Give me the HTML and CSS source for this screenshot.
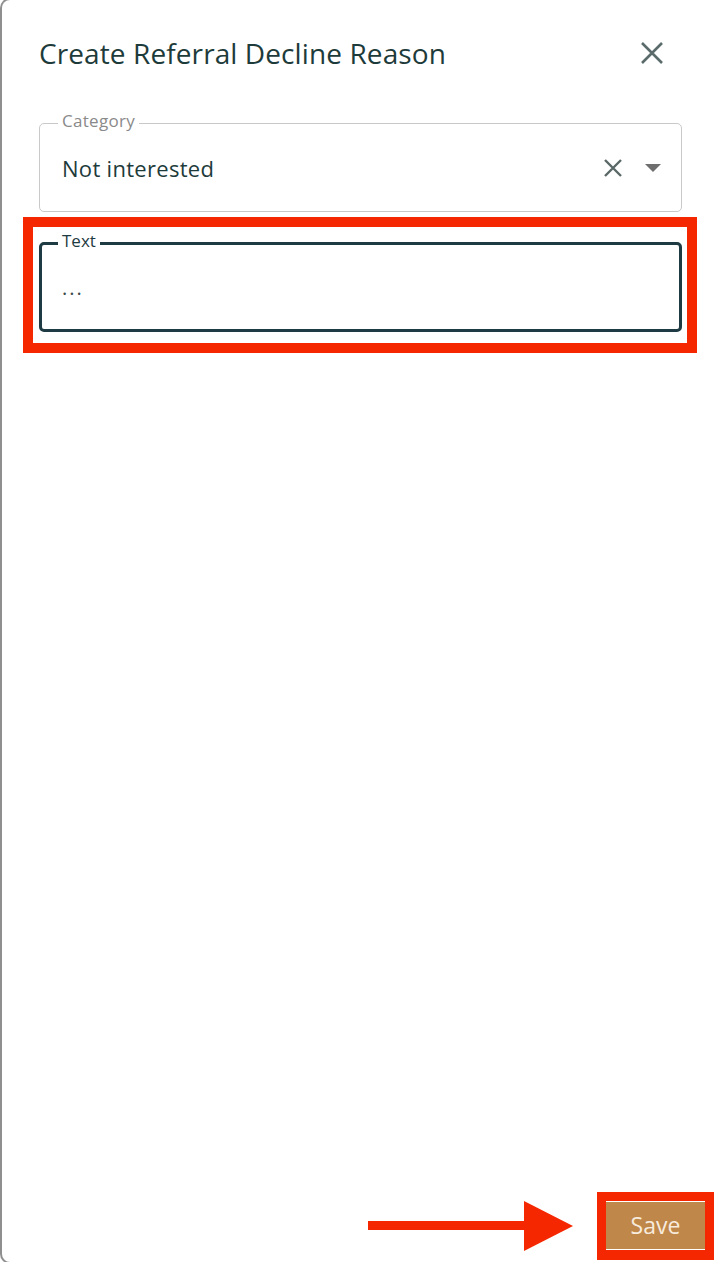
FILE: index.html
```html
<!DOCTYPE html>
<html lang="en">
<head>
<meta charset="utf-8">
<title>Create Referral Decline Reason</title>
<link rel="stylesheet" href="styles.css">
</head>
<body>
<div class="panel">
  <header class="header">
    <h1 class="title">Create Referral Decline Reason</h1>
    <button class="close" aria-label="Close">
      <svg width="24" height="24" viewBox="0 0 24 24"><path d="M2 2 L22 22 M22 2 L2 22" stroke="#5b6b6b" stroke-width="2.6" fill="none"/></svg>
    </button>
  </header>
  <div class="form">
    <div class="field field-select">
      <span class="label label-muted">Category</span>
      <span class="value">Not interested</span>
      <span class="adorn">
        <svg class="clear" width="20" height="20" viewBox="0 0 20 20"><path d="M2 2 L18 18 M18 2 L2 18" stroke="#5a6868" stroke-width="2.4" fill="none"/></svg>
        <svg class="caret" width="16" height="8" viewBox="0 0 16 8"><path d="M0 0 H16 L8 8 Z" fill="#6e6e6e"/></svg>
      </span>
    </div>
    <div class="field field-text">
      <span class="label label-dark">Text</span>
      <span class="value value-text">...</span>
      <span class="annot-box annot-field"></span>
    </div>
  </div>
  <footer class="footer">
    <svg class="annot-arrow" width="206" height="50" viewBox="0 0 206 50"><rect x="0" y="20" width="160" height="9" fill="#f52700"/><path d="M156 0 L205 25 L156 50 Z" fill="#f52700"/></svg>
    <div class="save-wrap">
      <button class="save">Save</button>
      <span class="annot-box annot-save"></span>
    </div>
  </footer>
</div>
</body>
</html>
```
FILE: styles.css
```css
html, body {
  margin: 0;
  padding: 0;
  background: #ffffff;
  overflow: hidden;
}
body {
  font-family: "Open Sans", Lato, sans-serif;
  color: #1f3a3a;
}
.panel {
  box-sizing: border-box;
  width: 716px;
  height: 1266px;
  margin-top: -2px;
  border-left: 2px solid #8f8f8f;
  border-top: 2px solid #8f8f8f;
  border-bottom: 2px solid #8f8f8f;
  border-radius: 10px 0 0 10px;
  display: flex;
  flex-direction: column;
}
.header {
  display: flex;
  align-items: center;
  justify-content: space-between;
  padding: 32px 52px 0 37px;
  height: 42px;
}
.title {
  margin: 0;
  font-size: 28px;
  font-weight: 400;
  line-height: 40px;
  color: #1d3b3a;
  letter-spacing: 0.1px;
}
.close {
  border: 0;
  background: none;
  padding: 0;
  width: 24px;
  height: 24px;
  display: flex;
}
.form {
  display: flex;
  flex-direction: column;
  gap: 30px;
  padding: 49px 34px 0 37px;
}
.field {
  position: relative;
  box-sizing: border-box;
  display: flex;
  align-items: center;
  border-radius: 5px;
}
.field-select {
  height: 89px;
  border: 1px solid #c9c9c9;
  padding: 0 20px 0 22px;
}
.field-text {
  height: 90px;
  border: 3px solid #1e3a42;
  padding: 0 20px 0 20px;
}
.label {
  position: absolute;
  top: -14px;
  left: 18px;
  padding: 0 4px;
  background: #ffffff;
  font-size: 17px;
  line-height: 22px;
  letter-spacing: 0.3px;
}
.label-muted { color: #8a8a8a; }
.label-dark { color: #1e3a42; top: -15px; left: 16px; letter-spacing: 0; }
.value {
  flex: 1;
  font-size: 22px;
  line-height: 28px;
  color: #1d3b3a;
  letter-spacing: 0.3px;
}
.value-text {
  font-size: 20px;
  letter-spacing: 2px;
  color: #3a4a4a;
  padding-top: 2px;
}
.adorn {
  display: flex;
  align-items: center;
  gap: 22px;
}
.annot-box {
  position: absolute;
  border: 10px solid #f52700;
  pointer-events: none;
}
.annot-field {
  left: -19px;
  right: -18px;
  top: -28px;
  bottom: -24px;
}
.footer {
  margin-top: auto;
  position: relative;
  display: flex;
  justify-content: flex-end;
  padding: 0 11px 13px 0;
}
.annot-arrow {
  position: absolute;
  left: 366px;
  top: -1px;
}
.save-wrap {
  position: relative;
}
.save {
  width: 99px;
  height: 47px;
  border: 0;
  background: #c0874a;
  color: #f7ebdd;
  font-family: "Open Sans", Lato, sans-serif;
  font-size: 23px;
  padding: 0 0 2px 0;
  display: block;
}
.annot-save {
  left: -9px;
  right: -9px;
  top: -10px;
  bottom: -11px;
  border-width: 9px 9px 10px 9px;
}
```
